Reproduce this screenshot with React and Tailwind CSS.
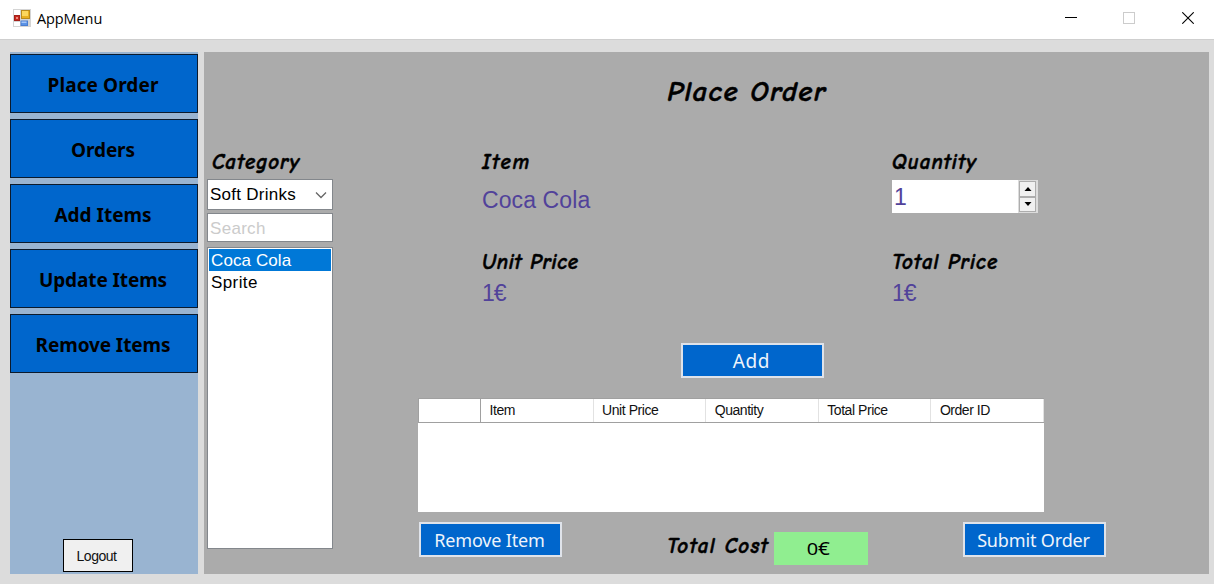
import React from "react";

const MENU = [
  { label: "Place Order", spacing: "tracking-[0.1px]" },
  { label: "Orders", spacing: "tracking-[-0.1px]" },
  { label: "Add Items", spacing: "tracking-[0px]" },
  { label: "Update Items", spacing: "tracking-[-0.1px]" },
  { label: "Remove Items", spacing: "tracking-[-0.1px]" },
];

const COLUMNS = ["Item", "Unit Price", "Quantity", "Total Price", "Order ID"];

function AppIcon() {
  return (
    <svg width="18" height="18" viewBox="0 0 18 18" className="block">
      <rect width="18" height="18" fill="#d4d4d4" />
      <rect x="1" y="1" width="6" height="5" fill="#fff" />
      <rect x="1" y="13" width="6" height="4" fill="#fff" />
      <rect x="8.5" y="1.5" width="8" height="8" fill="#e9b020" stroke="#b98a1c" />
      <rect x="9" y="2" width="6" height="5" fill="#fbd65c" />
      <rect x="1.5" y="6.5" width="5" height="5" fill="#c8281e" stroke="#a3201a" />
      <rect x="3" y="8" width="2" height="2" fill="#ef8c80" />
      <rect x="8" y="12" width="6.5" height="4.5" fill="#5b93e6" stroke="#4a7dd0" />
      <rect x="8.5" y="12.5" width="5" height="1.5" fill="#a5c6f7" />
    </svg>
  );
}

function TitleBar() {
  return (
    <header className="flex h-10 shrink-0 items-start border-b border-[#cfcfcf] bg-white pl-[13px]">
      <div className="mt-[9px]">
        <AppIcon />
      </div>
      <div className="ml-[6px] mt-[9px] font-['Open_Sans',sans-serif] text-[14.5px] leading-5 tracking-[-0.1px] text-black">
        AppMenu
      </div>
      <div className="ml-auto mt-3 flex pr-5">
        <svg width="12" height="12" viewBox="0 0 12 12" shapeRendering="crispEdges">
          <rect y="5" width="12" height="1" fill="#000" />
        </svg>
        <svg className="ml-[46px]" width="12" height="12" viewBox="0 0 12 12" shapeRendering="crispEdges">
          <rect x="0.5" y="0.5" width="11" height="11" fill="none" stroke="#ccc" />
        </svg>
        <svg className="ml-[47px]" width="12" height="12" viewBox="0 0 12 12">
          <path d="M0.3 0.3L11.7 11.7M11.7 0.3L0.3 11.7" stroke="#000" strokeWidth="1.1" />
        </svg>
      </div>
    </header>
  );
}

function Sidebar() {
  return (
    <nav className="flex w-[188px] shrink-0 flex-col bg-[#99b4d1] pt-[2px]">
      <div className="flex flex-col gap-[6px]">
        {MENU.map((m) => (
          <button
            key={m.label}
            className={
              "h-[59px] border-[1.5px] border-[#0b1a2c] bg-[#0066cc] pr-[2px] pt-[3px] font-['Noto_Sans',sans-serif] text-[19px] font-bold text-black " +
              m.spacing
            }
          >
            {m.label}
          </button>
        ))}
      </div>
      <button className="mb-[2px] ml-[53px] mt-auto h-[33px] w-[70px] border border-black bg-[#f0f0f0] pr-[3px] pt-px font-['Liberation_Sans',sans-serif] text-[14px] tracking-[-0.5px] text-[#111]">
        Logout
      </button>
    </nav>
  );
}

function Label({ children, spacing = "tracking-[0.6px]" }) {
  return (
    <div
      className={
        "h-7 whitespace-nowrap font-['Comic_Sans_MS','Comic_Neue',Lato,sans-serif] text-[21px] font-bold italic leading-7 text-black [-webkit-text-stroke:0.5px_black] " +
        spacing
      }
    >
      {children}
    </div>
  );
}

function Value({ children, spacing = "tracking-[0.1px]" }) {
  return (
    <div
      className={
        "whitespace-nowrap font-['Liberation_Sans',sans-serif] text-[23px] leading-7 text-[#51429a] " + spacing
      }
    >
      {children}
    </div>
  );
}

function ActionButton({ children, size = "text-[18px] tracking-[-0.15px]" }) {
  return (
    <button
      className={
        "h-[35px] w-[143px] whitespace-nowrap border-2 border-[#dfe3ea] bg-[#0066cc] pr-[2px] pt-px font-['Noto_Sans',sans-serif] leading-7 text-[#eef4fb] " +
        size
      }
    >
      {children}
    </button>
  );
}

function CategoryColumn() {
  return (
    <section className="flex w-[126px] shrink-0 flex-col font-['Liberation_Sans',sans-serif] text-[17px]">
      <div className="pl-[5px]">
        <Label spacing="tracking-[1px]">Category</Label>
      </div>
      <div className="mt-[3px] flex h-[31px] items-center justify-between border border-[#83878c] bg-white pl-[2px] pr-[5px] text-black">
        <span className="tracking-[0.25px]">Soft Drinks</span>
        <svg width="12" height="8" viewBox="0 0 12 8" fill="none" stroke="#666" strokeWidth="1.3">
          <path d="M1 1.5L6 6.5L11 1.5" />
        </svg>
      </div>
      <div className="mt-[3px] flex h-[29px] items-center border border-[#83878c] bg-white pl-[2px] pt-[3px] tracking-[0.3px] text-[#cbcbcb]">
        Search
      </div>
      <div className="mt-[5px] h-[302px] border border-[#83878c] bg-white p-px">
        <div className="flex h-[22px] items-center bg-[#0078d7] pl-[2px] pt-[2px] tracking-[0.1px] text-white">
          Coca Cola
        </div>
        <div className="flex h-[22px] items-center pl-[2px] pt-[2px] tracking-[0.4px] text-black">Sprite</div>
      </div>
    </section>
  );
}

function Spinner() {
  return (
    <div className="mt-1 flex h-[33px] w-[146px] justify-between bg-white">
      <span className="pl-[2px] pt-[3px] font-['Liberation_Sans',sans-serif] text-[23px] leading-7 text-[#51429a]">1</span>
      <div className="flex w-5 flex-col bg-[#dcdcdc] py-[1px] pl-px pr-[2px]">
        <div className="flex flex-1 items-center justify-center border border-[#adadad] bg-[#f0f0f0]">
          <svg width="8" height="4" viewBox="0 0 8 4">
            <path d="M0.5 4L4 0L7.5 4Z" fill="#000" />
          </svg>
        </div>
        <div className="flex flex-1 items-center justify-center border border-[#adadad] bg-[#f0f0f0]">
          <svg width="8" height="4" viewBox="0 0 8 4">
            <path d="M0.5 0L4 4L7.5 0Z" fill="#000" />
          </svg>
        </div>
      </div>
    </div>
  );
}

function OrderTable() {
  return (
    <div className="ml-[85px] mt-5 flex h-[114px] w-[626px] flex-col bg-white">
      <div className="flex h-[25px] border-b border-l border-t border-[#a0a0a0] font-['Liberation_Sans',sans-serif] text-[14px] leading-[23px] tracking-[-0.45px] text-[#111]">
        <div className="w-[62px] border-r border-[#a0a0a0]" />
        {COLUMNS.map((c) => (
          <div key={c} className="flex-1 border-r border-[#e2e2e2] pl-[8.5px]">
            {c}
          </div>
        ))}
      </div>
    </div>
  );
}

export default function App() {
  return (
    <div className="flex h-[584px] w-[1214px] flex-col overflow-hidden bg-[#dcdcdc]">
      <TitleBar />
      <div className="flex flex-1 gap-[6px] pb-[10px] pl-[10px] pr-[5px] pt-3">
        <Sidebar />
        <main className="flex flex-1 flex-col bg-[#ababab]">
          <h1 className="h-[96px] pl-[81px] pt-5 text-center font-['Comic_Sans_MS','Comic_Neue',Lato,sans-serif] text-[29px] font-bold italic leading-10 tracking-[1.2px] text-black [-webkit-text-stroke:0.5px_black]">
            Place Order
          </h1>
          <div className="flex pl-[3px]">
            <CategoryColumn />
            <section className="flex flex-1 flex-col">
              <div className="grid h-[195px] grid-cols-[410px_1fr] grid-rows-[100px_95px] pl-[149px]">
                <div>
                  <Label spacing="tracking-[1.5px]">Item</Label>
                  <div className="mt-[10px]">
                    <Value>Coca Cola</Value>
                  </div>
                </div>
                <div>
                  <Label spacing="tracking-[1.1px]">Quantity</Label>
                  <Spinner />
                </div>
                <div>
                  <Label spacing="tracking-[0.6px]">Unit Price</Label>
                  <div className="mt-[3px]">
                    <Value spacing="tracking-[-1px]">1€</Value>
                  </div>
                </div>
                <div>
                  <Label spacing="tracking-[1px]">Total Price</Label>
                  <div className="mt-[3px]">
                    <Value spacing="tracking-[-1px]">1€</Value>
                  </div>
                </div>
              </div>
              <div className="pl-[348px]">
                <ActionButton size="text-[19px] tracking-[0.6px]">Add</ActionButton>
              </div>
              <OrderTable />
              <div className="mt-[10px] flex items-start pl-[86px]">
                <ActionButton>Remove Item</ActionButton>
                <div className="ml-[105px] mt-[10px] w-[107px]">
                  <Label spacing="tracking-[1.3px]">Total Cost</Label>
                </div>
                <div className="mr-[95px] mt-[10px] flex h-[33px] w-[94px] items-baseline justify-center bg-[#90ee90] pr-[5px] pt-[2px] font-['Noto_Sans',sans-serif] text-[18px] leading-7 text-black">
                  <span className="inline-block origin-bottom scale-x-125 text-[16px]">0</span>
                  <span className="ml-px inline-block origin-left scale-x-115">€</span>
                </div>
                <ActionButton>Submit Order</ActionButton>
              </div>
            </section>
          </div>
        </main>
      </div>
    </div>
  );
}
